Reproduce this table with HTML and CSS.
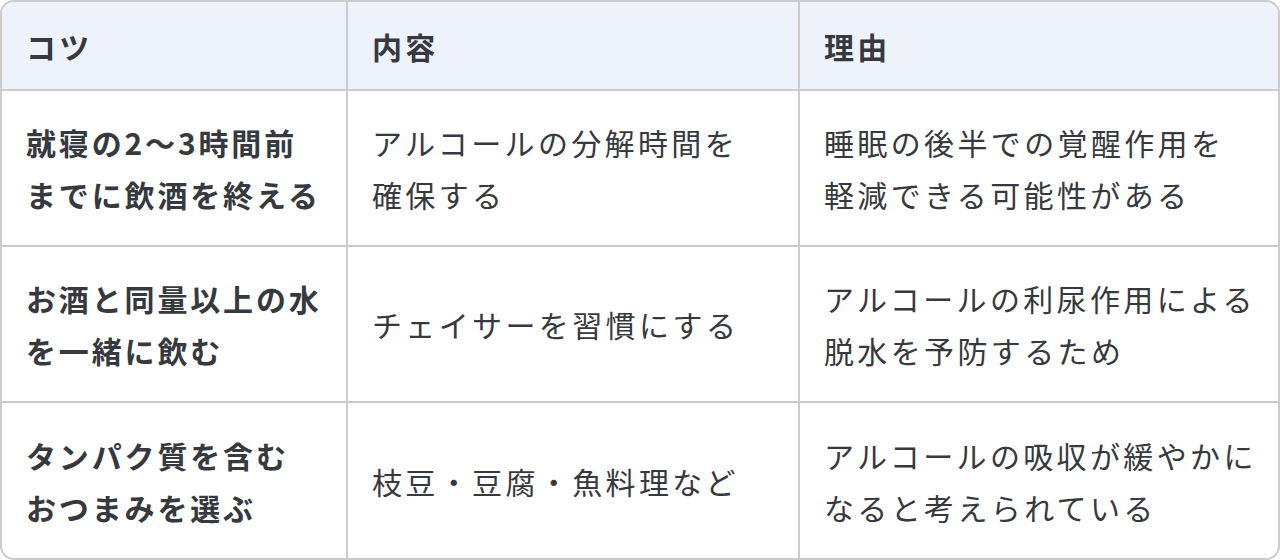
FILE: index.html
```html
<!DOCTYPE html>
<html lang="ja">
<head>
<meta charset="utf-8">
<link rel="stylesheet" href="styles.css">
</head>
<body>
<div class="wrap">
<table class="tips">
<colgroup>
<col class="c1"><col class="c2"><col class="c3">
</colgroup>
<thead>
<tr><th>コツ</th><th>内容</th><th>理由</th></tr>
</thead>
<tbody>
<tr>
<td class="key">就寝の2〜3時間前<br>までに飲酒を終える</td>
<td>アルコールの分解時間を<br>確保する</td>
<td>睡眠の後半での覚醒作用を<br>軽減できる可能性がある</td>
</tr>
<tr>
<td class="key">お酒と同量以上の水<br>を一緒に飲む</td>
<td>チェイサーを習慣にする</td>
<td>アルコールの利尿作用による<br>脱水を予防するため</td>
</tr>
<tr>
<td class="key">タンパク質を含む<br>おつまみを選ぶ</td>
<td>枝豆・豆腐・魚料理など</td>
<td>アルコールの吸収が緩やかに<br>なると考えられている</td>
</tr>
</tbody>
</table>
</div>
</body>
</html>
```

FILE: styles.css
```css
html, body {
  margin: 0;
  padding: 0;
  background: #ffffff;
}
body {
  font-family: "Noto Sans CJK JP", "Noto Sans", sans-serif;
  color: #36393e;
}
.wrap {
  width: 1280px;
  height: 560px;
  box-sizing: border-box;
  border: 2px solid #cbcbcd;
  border-radius: 14px;
  overflow: hidden;
}
.tips {
  width: 1276px;
  border-collapse: separate;
  border-spacing: 0;
  table-layout: fixed;
}
.c1 { width: 346px; }
.c2 { width: 452px; }
.c3 { width: 478px; }
.tips th,
.tips td {
  font-size: 30px;
  line-height: 52px;
  letter-spacing: 0.112em;
  text-align: left;
  vertical-align: middle;
  white-space: nowrap;
  padding: 0 0 0 24px;
  border-right: 2px solid #cbcbcd;
  border-bottom: 2px solid #cbcbcd;
}
.tips th:last-child,
.tips td:last-child {
  border-right: none;
}
.tips tbody tr:last-child td {
  border-bottom: none;
  height: 155px;
}
.tips th {
  background: #eef2fb;
  font-weight: 700;
  height: 89px;
  box-sizing: border-box;
}
.tips td {
  height: 156px;
  box-sizing: border-box;
  font-weight: 400;
}
.tips td.key {
  font-weight: 700;
  letter-spacing: 0.095em;
}
```
